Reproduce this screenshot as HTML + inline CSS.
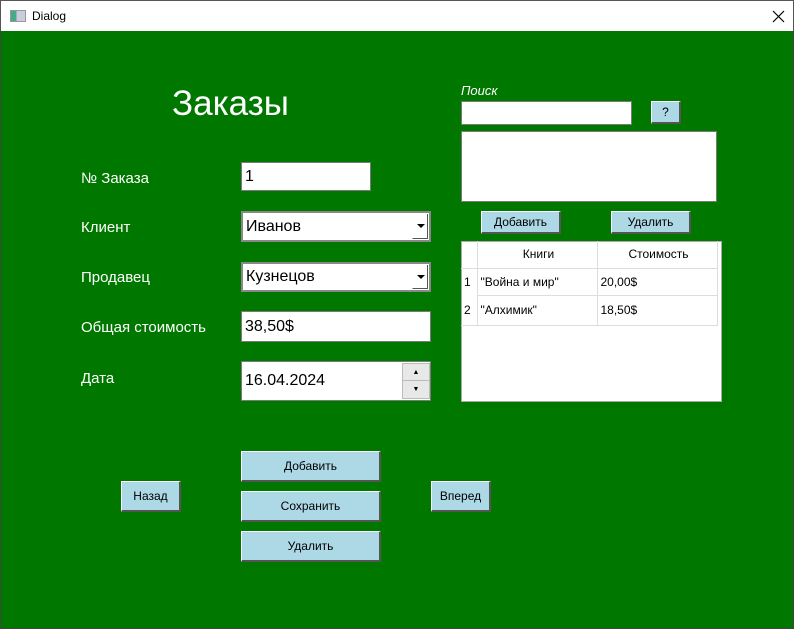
<!DOCTYPE html>
<html><head><meta charset="utf-8"><style>
*{box-sizing:border-box;margin:0;padding:0}
body{width:794px;height:629px;position:relative;overflow:hidden;font-family:"Liberation Sans","DejaVu Sans",sans-serif;background:#fff}
.a{position:absolute}
#tb{left:0;top:0;width:794px;height:31px;background:#fff;border:1px solid #555;border-bottom:none}
#g{left:0;top:31px;width:794px;height:598px;background:#007800;border:1px solid #444;border-top:none}
.lbl{color:#fff;font-size:15px}
.in{background:#fff;border:1px solid #7a7a7a;font-size:16px;color:#000;padding-left:3px;display:flex;align-items:center}
.btn{background:#add8e6;border:1px solid #fff;border-right:2px solid #555;border-bottom:2px solid #555;font-size:12px;color:#000;display:flex;align-items:center;justify-content:center}
.dd{position:absolute;right:1px;top:1px;width:16px;bottom:1px;border-left:1px solid #fff;border-right:1px solid #555;border-bottom:1px solid #555;background:#fff}
.dd:after{content:"";position:absolute;left:4px;top:10px;border-left:4px solid transparent;border-right:4px solid transparent;border-top:4px solid #000}
td{border:1px solid #ddd;font-size:12px;height:27px;padding-left:3px}
</style></head><body>
<div class="a" id="tb">
<div class="a" style="left:9px;top:9px;width:16px;height:12px;border:1px solid #999;background:linear-gradient(90deg,#4a8 0,#4a8 40%,#ccd 40%)"></div>
<div class="a" style="left:31px;top:8px;font-size:12px">Dialog</div>
<svg class="a" style="left:771px;top:9px" width="13" height="13"><path d="M1 1L12 12M12 1L1 12" stroke="#000" stroke-width="1.2"/></svg>
</div>
<div class="a" id="g"></div>
<div class="a" style="left:172px;top:84px;color:#fff;font-size:35px">Заказы</div>
<div class="a lbl" style="left:81px;top:170px">№ Заказа</div>
<div class="a lbl" style="left:81px;top:219px">Клиент</div>
<div class="a lbl" style="left:81px;top:269px">Продавец</div>
<div class="a lbl" style="left:81px;top:319px">Общая стоимость</div>
<div class="a lbl" style="left:81px;top:370px">Дата</div>
<div class="a in" style="left:241px;top:162px;width:130px;height:29px">1</div>
<div class="a in" style="left:241px;top:211px;width:190px;height:31px;border:2px solid #888">Иванов<div class="dd"></div></div>
<div class="a in" style="left:241px;top:262px;width:190px;height:30px;border:2px solid #888">Кузнецов<div class="dd"></div></div>
<div class="a in" style="left:241px;top:311px;width:190px;height:31px">38,50$</div>
<div class="a in" style="left:241px;top:361px;width:190px;height:40px">16.04.2024
<div class="a" style="left:160px;top:1px;width:28px;height:36px;background:#e8e8e8;border:1px solid #bbb">
<div style="height:17px;border-bottom:1px solid #bbb;font-size:7px;text-align:center;line-height:17px">▲</div>
<div style="font-size:7px;text-align:center;line-height:17px">▼</div></div></div>
<div class="a" style="left:461px;top:83px;color:#fff;font-size:13px;font-style:italic">Поиск</div>
<div class="a in" style="left:461px;top:101px;width:171px;height:24px"></div>
<div class="a btn" style="left:651px;top:101px;width:30px;height:23px">?</div>
<div class="a in" style="left:461px;top:131px;width:256px;height:71px"></div>
<div class="a btn" style="left:481px;top:211px;width:80px;height:23px">Добавить</div>
<div class="a btn" style="left:611px;top:211px;width:80px;height:23px">Удалить</div>
<div class="a" style="left:461px;top:241px;width:261px;height:161px;background:#fff;border:1px solid #aaa">
<table style="border-collapse:collapse;position:absolute;left:-1px;top:-1px">
<tr><td style="width:16px;border-left:none;border-top:none"></td><td style="width:120px;text-align:center;border-top:none">Книги</td><td style="width:120px;text-align:center;border-top:none">Стоимость</td></tr>
<tr><td style="border-left:none;border-bottom:none">1</td><td>"Война и мир"</td><td>20,00$</td></tr>
<tr><td style="border-left:none;border-top:none;height:30px">2</td><td style="height:30px">"Алхимик"</td><td style="height:30px">18,50$</td></tr>
</table></div>
<div class="a btn" style="left:241px;top:451px;width:140px;height:31px">Добавить</div>
<div class="a btn" style="left:241px;top:491px;width:140px;height:31px">Сохранить</div>
<div class="a btn" style="left:241px;top:531px;width:140px;height:31px">Удалить</div>
<div class="a btn" style="left:121px;top:481px;width:60px;height:31px">Назад</div>
<div class="a btn" style="left:431px;top:481px;width:60px;height:31px">Вперед</div>
</body></html>
